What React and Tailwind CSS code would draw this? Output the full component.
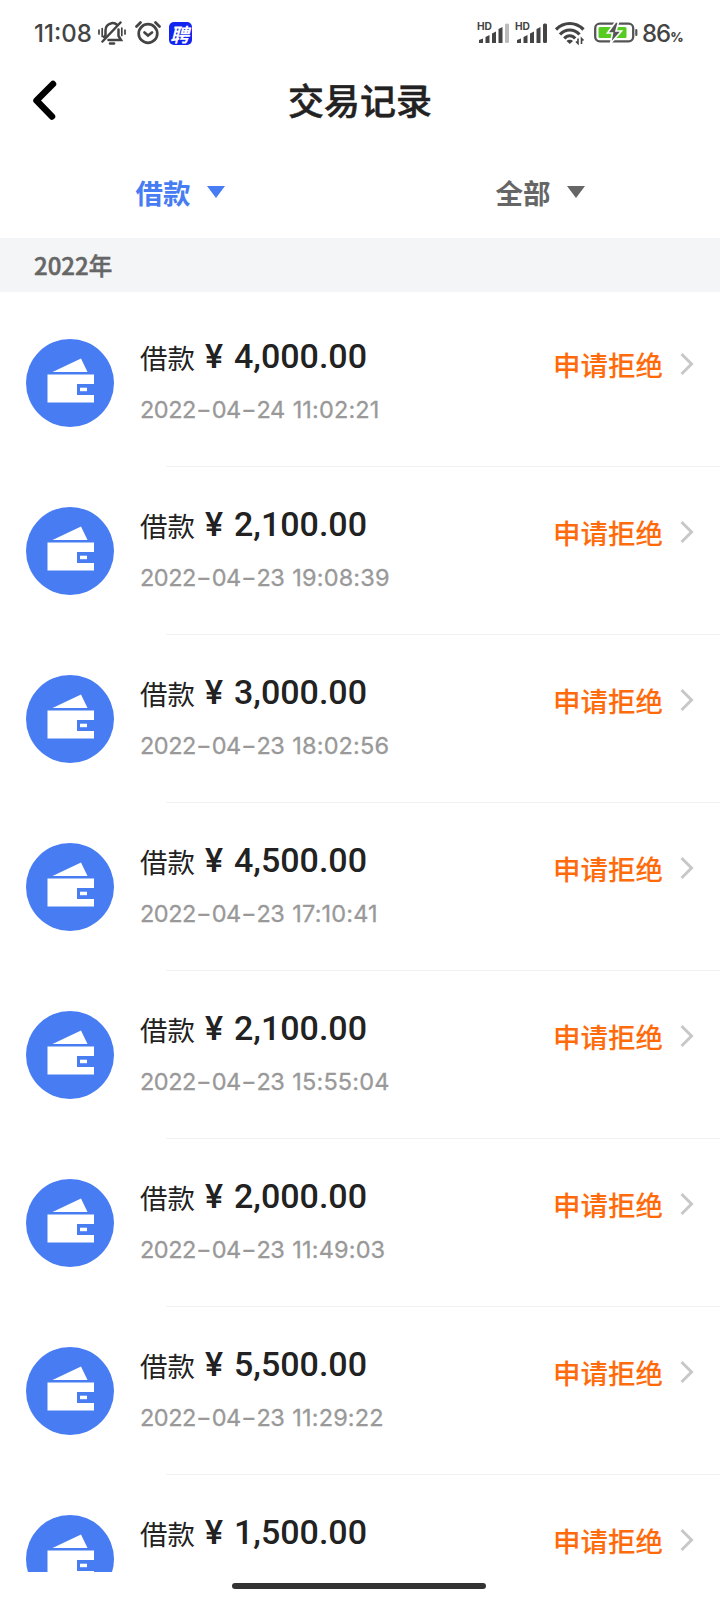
import React, { useState } from 'react';

const records = [
  { id: 1, amount: '4,000.00', date: '2022-04-24', time: '11:02:21' },
  { id: 2, amount: '2,100.00', date: '2022-04-23', time: '19:08:39' },
  { id: 3, amount: '3,000.00', date: '2022-04-23', time: '18:02:56' },
  { id: 4, amount: '4,500.00', date: '2022-04-23', time: '17:10:41' },
  { id: 5, amount: '2,100.00', date: '2022-04-23', time: '15:55:04' },
  { id: 6, amount: '2,000.00', date: '2022-04-23', time: '11:49:03' },
  { id: 7, amount: '5,500.00', date: '2022-04-23', time: '11:29:22' },
  { id: 8, amount: '1,500.00' },
];

function Signal({ weak }) {
  return (
    <svg className="w-8 h-6 shrink-0" viewBox="0 0 32 24" fill="#444">
      <text x="0" y="8.5" fontSize="10.5" fontWeight="700" fontFamily="Inter, sans-serif" textLength="15" lengthAdjust="spacingAndGlyphs">HD</text>
      <path d="M2 19L6 17.500V22H2Z" />
      <path d="M8.500 16L12.500 14V22H8.500Z" />
      <path d="M15 12.500L19 10.500V22H15Z" />
      <path d="M21.500 8L25.500 6V22H21.500Z" />
      <rect x="28" y="2.500" width="4" height="19.500" rx="1.500" fill={weak ? '#bbb' : '#444'} />
    </svg>
  );
}

function StatusBar() {
  return (
    <div className="flex h-[60px] shrink-0 items-center pl-[34px] pr-[37px] pt-1.5 text-[#444]">
      <span className="mt-0.5 w-[64px] font-['Inter',sans-serif] text-[24px] font-medium leading-none">11:08</span>

      {/* muted bell */}
      <svg className="w-7 h-6 shrink-0" viewBox="0 0 28 24" fill="none" stroke="#444" strokeWidth="2.500" strokeLinecap="round">
        <path d="M6 16L7.500 14V9.500C7.500 5.500 10 3 13.500 2.200C15.800 1.700 18 2.800 19.300 4M20.500 8.500V15L23 19H10.500" />
        <path d="M4.500 20.500L22.500 1.500" />
        <path d="M12 22.500H16" />
        <path d="M1 9V13M4.200 7.500V15.500M23.800 7V14.500M27 9V13" strokeWidth="1.700" />
      </svg>

      {/* alarm clock */}
      <svg className="ml-2 w-7 h-6 shrink-0" viewBox="0 0 28 24" fill="none" stroke="#444" strokeWidth="2.700" strokeLinecap="round">
        <circle cx="14" cy="12.500" r="9.300" />
        <path d="M10.500 11.500L14 14.500L18 11.500" />
        <path d="M2.500 5.500L6.500 1.500M25.500 5.500L21.500 1.500" />
      </svg>

      <span className="ml-[7px] flex h-[23px] w-[23px] items-center justify-center rounded-[5px] bg-[#1424f0] pr-0.5 font-['Noto_Sans_CJK_SC',sans-serif] text-[19px] font-bold italic leading-none text-white">聘</span>

      <div className="ml-auto flex items-center">
        <Signal weak />
        <div className="w-1.5" />
        <Signal />

        {/* wifi */}
        <svg className="ml-2 w-[30px] h-6 shrink-0" viewBox="0 0 30 24" fill="none" stroke="#444" strokeWidth="3.200">
          <path d="M1 8.500C9 0.500 20.500 0.500 28.500 8.500" />
          <path d="M5 13.500C10.500 7.500 19 7.500 24.500 13.500" />
          <path d="M9.300 17.500C12.500 13.800 17 13.800 20.200 17.500" />
          <path d="M11.500 20C13 18.300 16.500 18.300 18 20L14.750 23Z" fill="#444" stroke="none" />
          <path d="M23 17.500V22.500L21 20.500M26.500 23V17.500L28.500 19.500" strokeWidth="1.600" />
        </svg>

        {/* charging battery */}
        <svg className="ml-[9px] w-[45px] h-6 shrink-0" viewBox="0 0 45 24" fill="none">
          <rect x="1.200" y="2.700" width="38" height="17.600" rx="4.500" stroke="#555" strokeWidth="2.300" />
          <rect x="4.500" y="6" width="28" height="11" rx="1.500" fill="#57cb22" />
          <path d="M21.500 1L13.500 12H18.500L16.500 22.500L27.500 10H22L24.500 1Z" fill="#555" stroke="#fff" strokeWidth="1.600" />
          <path d="M42.300 9V14" stroke="#555" strokeWidth="2.200" strokeLinecap="round" />
        </svg>
        <span className="ml-[3px] mt-0.5 flex w-[41px] items-baseline font-['Inter',sans-serif] text-[24px] font-medium leading-none tracking-[-1px]">
          86<span className="text-[13px] font-extrabold tracking-normal">%</span>
        </span>
      </div>
    </div>
  );
}

function WalletIcon() {
  return (
    <svg className="w-[88px] h-[88px] shrink-0" viewBox="0 0 88 88">
      <circle cx="44" cy="44" r="44" fill="#477cf3" />
      <path d="M26.500 33L55 19.500L61.500 33Z" fill="#fff" />
      <path d="M21.500 35.500H68V45H51V56H68V63.500H21.500Z" fill="#fff" />
      <rect x="54" y="48.700" width="7" height="3.500" fill="#fff" />
    </svg>
  );
}

function Timestamp({ date, time }) {
  const [year, month, day] = date.split('-');
  return (
    <div className="mt-6 flex font-['Inter',sans-serif] text-[23.500px] leading-none text-[#999] [-webkit-text-stroke:0.3px_#999]">
      <span className="tracking-[-0.500px]">{year}</span>
      <span className="inline-block origin-center scale-x-140 px-[2.500px]">-</span>
      <span className="tracking-[-0.500px]">{month}</span>
      <span className="inline-block origin-center scale-x-140 px-[2.500px]">-</span>
      <span className="tracking-[-0.500px]">{day}</span>
      <span className="ml-[8px] tracking-[0.150px]">{time}</span>
    </div>
  );
}

function RecordRow({ record }) {
  return (
    <div className="relative flex h-[168px] shrink-0 pl-[26px] pr-[26px] pt-10">
      <WalletIcon />
      <div className="ml-[26px] flex flex-col">
        <div className="-mt-px flex h-[36px] items-center whitespace-pre text-[#222]">
          <span className="mt-1 w-[65px] font-['Noto_Sans_CJK_SC',sans-serif] text-[27.500px] leading-none">借款</span>
          <span className="w-[29px] font-['Roboto',sans-serif] text-[34px] font-medium leading-none">¥</span>
          <span className="font-['Roboto',sans-serif] text-[34px] font-medium leading-none">{record.amount}</span>
        </div>
        {record.date && <Timestamp date={record.date} time={record.time} />}
      </div>
      <div className="-mt-px ml-auto flex h-[52px] items-center">
        <span className="pt-px font-['Noto_Sans_CJK_SC',sans-serif] text-[27.500px] font-medium leading-none text-[#ff6b0b]">申请拒绝</span>
        <svg className="ml-[17px] w-[14px] h-6" viewBox="0 0 14 24" fill="none" stroke="#c8c8c8" strokeWidth="3">
          <path d="M1.500 2L11.500 12L1.500 22" />
        </svg>
      </div>
      <div className="absolute bottom-0 left-[166px] right-0 h-px bg-[#f2f2f2]" />
    </div>
  );
}

export default function App() {
  const [activeTab, setActiveTab] = useState('loan');

  return (
    <div className="flex h-[1600px] w-[720px] flex-col overflow-hidden bg-white">
      <StatusBar />

      {/* Header */}
      <header className="grid h-[80px] shrink-0 grid-cols-[100px_1fr_100px] items-center">
        <button className="pl-[31px]">
          <svg className="w-7 h-10" viewBox="0 0 28 40" fill="none" stroke="#000" strokeWidth="6.500" strokeLinecap="round" strokeLinejoin="round">
            <path d="M22 4L5.500 20.500L21 36.500" />
          </svg>
        </button>
        <h1 className="-mt-0.5 text-center font-['Noto_Sans_CJK_SC',sans-serif] text-[36px] font-medium leading-none text-[#222] [-webkit-text-stroke:0.5px_#222]">交易记录</h1>
      </header>

      {/* Filters */}
      <div className="grid h-[98px] shrink-0 grid-cols-2 pt-[7px] font-['Noto_Sans_CJK_SC',sans-serif] text-[27.500px] font-bold leading-none">
        <button onClick={() => setActiveTab('loan')} className={`flex items-center justify-center gap-4 ${activeTab === 'loan' ? 'text-[#477cf3]' : 'text-[#666]'}`}>
          借款
          <svg className="-mt-0.5 w-[18px] h-3" viewBox="0 0 18 12" fill="currentColor"><path d="M0 0H18L9 12Z" /></svg>
        </button>
        <button onClick={() => setActiveTab('all')} className={`flex items-center justify-center gap-4 ${activeTab === 'all' ? 'text-[#477cf3]' : 'text-[#666]'}`}>
          全部
          <svg className="-mt-0.5 w-[18px] h-3" viewBox="0 0 18 12" fill="currentColor"><path d="M0 0H18L9 12Z" /></svg>
        </button>
      </div>

      <div className="flex h-[54px] shrink-0 items-center bg-[#f4f5f7] pl-[34px] font-['Noto_Sans_CJK_SC',sans-serif] text-[24px] font-medium leading-none text-[#666] [-webkit-text-stroke:0.5px_#666]">
        <span>2022<span className="text-[23.500px]">年</span></span>
      </div>

      {/* Records */}
      <div className="flex h-[1280px] shrink-0 flex-col overflow-hidden pt-[7px]">
        {records.map((r) => (
          <RecordRow key={r.id} record={r} />
        ))}
      </div>

      <div className="flex flex-1 pl-[232px] pt-[11px]">
        <div className="h-1.5 w-[254px] rounded-full bg-[#333]" />
      </div>
    </div>
  );
}
